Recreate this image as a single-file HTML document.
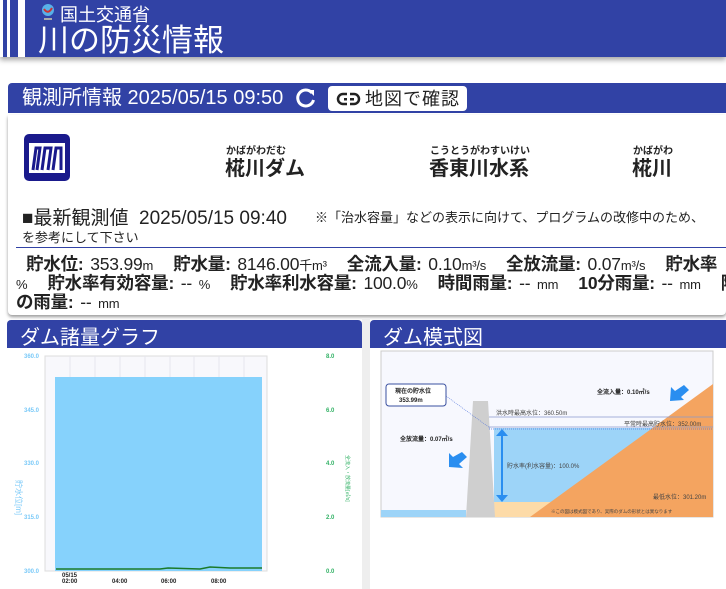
<!DOCTYPE html>
<html><head><meta charset="utf-8"><style>
*{margin:0;padding:0;box-sizing:border-box}
body{width:726px;height:589px;overflow:hidden;background:#fff;font-family:"Liberation Sans","Noto Sans CJK JP",sans-serif;position:relative;color:#222}
.a{position:absolute;white-space:nowrap}
.hdr{left:0;top:0;width:726px;height:57px;background:#3142a5;box-shadow:0 3px 5px rgba(0,0,0,.35)}
.st{top:0;height:57px;background:#fff}
.bar{background:#3142a5;color:#fff}
.b{font-weight:bold}
.d{font-size:17.5px;line-height:19px;letter-spacing:-.2px;word-spacing:2px}
.d small{font-size:13px}
</style></head><body>
<div class="a hdr"></div>
<div class="a st" style="left:0;width:3px"></div>
<div class="a st" style="left:7px;width:3px"></div>
<div class="a st" style="left:18px;width:7px"></div>
<svg class="a" style="left:40px;top:3px" width="16" height="18"><circle cx="8" cy="7" r="6" fill="#58b0e8"/><path d="M4 6 Q8 12 12 5" stroke="#c33" stroke-width="2" fill="none"/><rect x="4" y="15" width="8" height="2" fill="#aaa"/></svg>
<div class="a" style="left:60px;top:1px;color:#fff;font-size:18px">国土交通省</div>
<div class="a" style="left:38px;top:23px;color:#fff;font-size:31px;line-height:36px">川の防災情報</div>

<div class="a bar" style="left:8px;top:83px;width:718px;height:30px;border-radius:4px 0 0 0"></div>
<div class="a" style="left:22px;top:85px;color:#fff;font-size:20px;line-height:26px">観測所情報 2025/05/15 09:50</div>
<svg class="a" style="left:295px;top:87px" width="22" height="22" viewBox="0 0 22 22"><path d="M17 6 A8 8 0 1 0 18.5 13" stroke="#fff" stroke-width="3" fill="none"/><path d="M13 3 L19 3 L19 9 Z" fill="#fff"/></svg>
<div class="a" style="left:328px;top:86px;width:139px;height:25px;background:#fff;border-radius:4px"></div>
<svg class="a" style="left:336px;top:91px" width="26" height="16" viewBox="0 0 26 16"><rect x="2" y="3" width="21" height="10" rx="5" stroke="#222" stroke-width="2.5" fill="none"/><rect x="8" y="7" width="10" height="2.5" fill="#222"/><rect x="11" y="1" width="3" height="14" fill="#fff"/></svg>
<div class="a" style="left:365px;top:87px;font-size:18px;line-height:24px;color:#222;letter-spacing:1px">地図で確認</div>

<div class="a" style="left:8px;top:115px;width:718px;height:200px;background:#fff;box-shadow:0 2px 3px rgba(0,0,0,.4);border-radius:0 0 4px 4px"></div>
<div class="a" style="left:24px;top:134px;width:46px;height:47px;background:#1a1a8c;border-radius:5px"></div>
<div class="a" style="left:29px;top:143px;width:36px;height:30px;background:#fff"></div>
<svg class="a" style="left:29px;top:143px" width="36" height="30"><path d="M4 27 L7 5 L11 5 L8 27 M13 27 L16 5 L22 5 L19 27 M24 27 L27 5 L32 5 L32 27" stroke="#1a1a8c" stroke-width="3" fill="none"/></svg>
<div class="a" style="left:226px;top:142px;font-size:10px;font-weight:bold">かばがわだむ</div>
<div class="a b" style="left:225px;top:152px;font-size:20px">椛川ダム</div>
<div class="a" style="left:430px;top:142px;font-size:10px;font-weight:bold">こうとうがわすいけい</div>
<div class="a b" style="left:429px;top:152px;font-size:20px">香東川水系</div>
<div class="a" style="left:633px;top:142px;font-size:10px;font-weight:bold">かばがわ</div>
<div class="a b" style="left:632px;top:152px;font-size:20px">椛川</div>

<div class="a" style="left:22px;top:203px;font-size:19px">■最新観測値&nbsp; 2025/05/15 09:40</div>
<div class="a" style="left:315px;top:207px;font-size:13px">※「治水容量」などの表示に向けて、プログラムの改修中のため、</div>
<div class="a" style="left:22px;top:227px;font-size:13px">を参考にして下さい</div>
<div class="a" style="left:16px;top:247px;width:710px;height:1px;background:#3142a5"></div>
<div class="a d" style="left:26px;top:255px"><b>貯水位:</b> 353.99<small>m</small> &nbsp; <b>貯水量:</b> 8146.00<small>千m³</small> &nbsp; <b>全流入量:</b> 0.10<small>m³/s</small> &nbsp; <b>全放流量:</b> 0.07<small>m³/s</small> &nbsp; <b>貯水率</b></div>
<div class="a d" style="left:16px;top:274px"><small>%</small> &nbsp; <b>貯水率有効容量:</b> -- <small>%</small> &nbsp; <b>貯水率利水容量:</b> 100.0<small>%</small> &nbsp; <b>時間雨量:</b> -- <small>mm</small> &nbsp; <b>10分雨量:</b> -- <small>mm</small> &nbsp; <b>降</b></div>
<div class="a d" style="left:16px;top:293px"><b>の雨量:</b> -- <small>mm</small></div>

<div class="a" style="left:362px;top:318px;width:8px;height:271px;background:#eee"></div>
<div class="a bar" style="left:7px;top:320px;width:355px;height:28px;border-radius:4px 4px 0 0"></div>
<div class="a" style="left:20px;top:321px;color:#fff;font-size:20px">ダム諸量グラフ</div>
<div class="a bar" style="left:370px;top:320px;width:356px;height:28px;border-radius:4px 0 0 0"></div>
<div class="a" style="left:383px;top:321px;color:#fff;font-size:20px">ダム模式図</div>

<svg class="a" style="left:0;top:348px" width="726" height="241" viewBox="0 348 726 241" font-family="Liberation Sans" font-size="6" font-weight="bold">
<rect x="45" y="356" width="222" height="215" fill="#f8f8fc" stroke="#ddd"/>
<g stroke="#e6e6ee"><line x1="70" y1="356" x2="70" y2="571"/><line x1="95" y1="356" x2="95" y2="571"/><line x1="120" y1="356" x2="120" y2="571"/><line x1="145" y1="356" x2="145" y2="571"/><line x1="170" y1="356" x2="170" y2="571"/><line x1="194" y1="356" x2="194" y2="571"/><line x1="219" y1="356" x2="219" y2="571"/><line x1="244" y1="356" x2="244" y2="571"/></g>
<rect x="55" y="377" width="207" height="194" fill="#86d2fc"/>
<path d="M56 569 L160 569 L168 568 L200 569 L210 567 L230 568 L262 568" stroke="#1a7a2a" stroke-width="1.5" fill="none"/>
<g fill="#7bcaf8"><text x="24" y="358">360.0</text><text x="24" y="412">345.0</text><text x="24" y="465">330.0</text><text x="24" y="519">315.0</text><text x="24" y="573">300.0</text></g>
<g fill="#33b266"><text x="326" y="358">8.0</text><text x="326" y="412">6.0</text><text x="326" y="465">4.0</text><text x="326" y="519">2.0</text><text x="326" y="573">0.0</text></g>
<text transform="translate(16,480) rotate(90)" fill="#7bcaf8" font-size="8" font-weight="normal">貯水位[m]</text>
<text transform="translate(346,455) rotate(90)" fill="#33b266" font-size="5" font-weight="normal">全流入・放流量[㎥/s]</text>
<g fill="#222"><text x="62" y="577">05/15</text><text x="62" y="583">02:00</text><text x="112" y="583">04:00</text><text x="161" y="583">06:00</text><text x="211" y="583">08:00</text></g>

<rect x="381" y="351" width="332" height="166" fill="#f7f8fe" stroke="#ccc"/>
<rect x="494" y="428" width="219" height="74" fill="#9dd4f8"/>
<rect x="494" y="502" width="60" height="15" fill="#fddba8"/>
<rect x="381" y="510" width="85" height="7" fill="#9dd4f8"/>
<polygon points="530,517 713,384 713,517" fill="#f4a460"/>
<polygon points="473,401 488,401 495,517 466,517" fill="#cfcfcf"/>
<line x1="489" y1="417" x2="713" y2="417" stroke="#8899cc" stroke-width=".8"/>
<line x1="489" y1="427" x2="713" y2="427" stroke="#8899cc" stroke-width=".8"/>
<line x1="489" y1="429" x2="713" y2="429" stroke="#5577dd" stroke-width=".8" stroke-dasharray="1,1"/>
<line x1="446" y1="396" x2="490" y2="428" stroke="#5577dd" stroke-width=".6" stroke-dasharray="1,1"/>
<line x1="502" y1="434" x2="502" y2="497" stroke="#2a8ef0" stroke-width="2"/>
<polygon points="496,436 502,429 508,436" fill="#2a8ef0"/><polygon points="496,495 502,502 508,495" fill="#2a8ef0"/>
<polygon points="684,385 689,390 681,397 684,400 670,401 671,387 675,391" fill="#2a8ef0"/>
<polygon points="462,452 467,457 459,464 463,468 449,467 449,453 453,457" fill="#2a8ef0"/>
<rect x="386" y="384" width="60" height="22" rx="3" fill="#fff" stroke="#3a50a0"/>
<text x="395" y="393" fill="#222">現在の貯水位</text><text x="399" y="402" fill="#222">353.99m</text>
<text x="597" y="394" fill="#222">全流入量：0.10㎥/s</text>
<text x="400" y="441" fill="#222">全放流量：0.07㎥/s</text>
<g font-weight="normal" fill="#444"><text x="496" y="415">洪水時最高水位：360.50m</text><text x="624" y="426">平常時最高貯水位：352.00m</text><text x="507" y="468">貯水率(利水容量)：100.0%</text><text x="653" y="499">最低水位：301.20m</text><text x="551" y="513" font-size="4.5">※この図は模式図であり、実際のダムの形状とは異なります</text></g>
</svg>
</body></html>
